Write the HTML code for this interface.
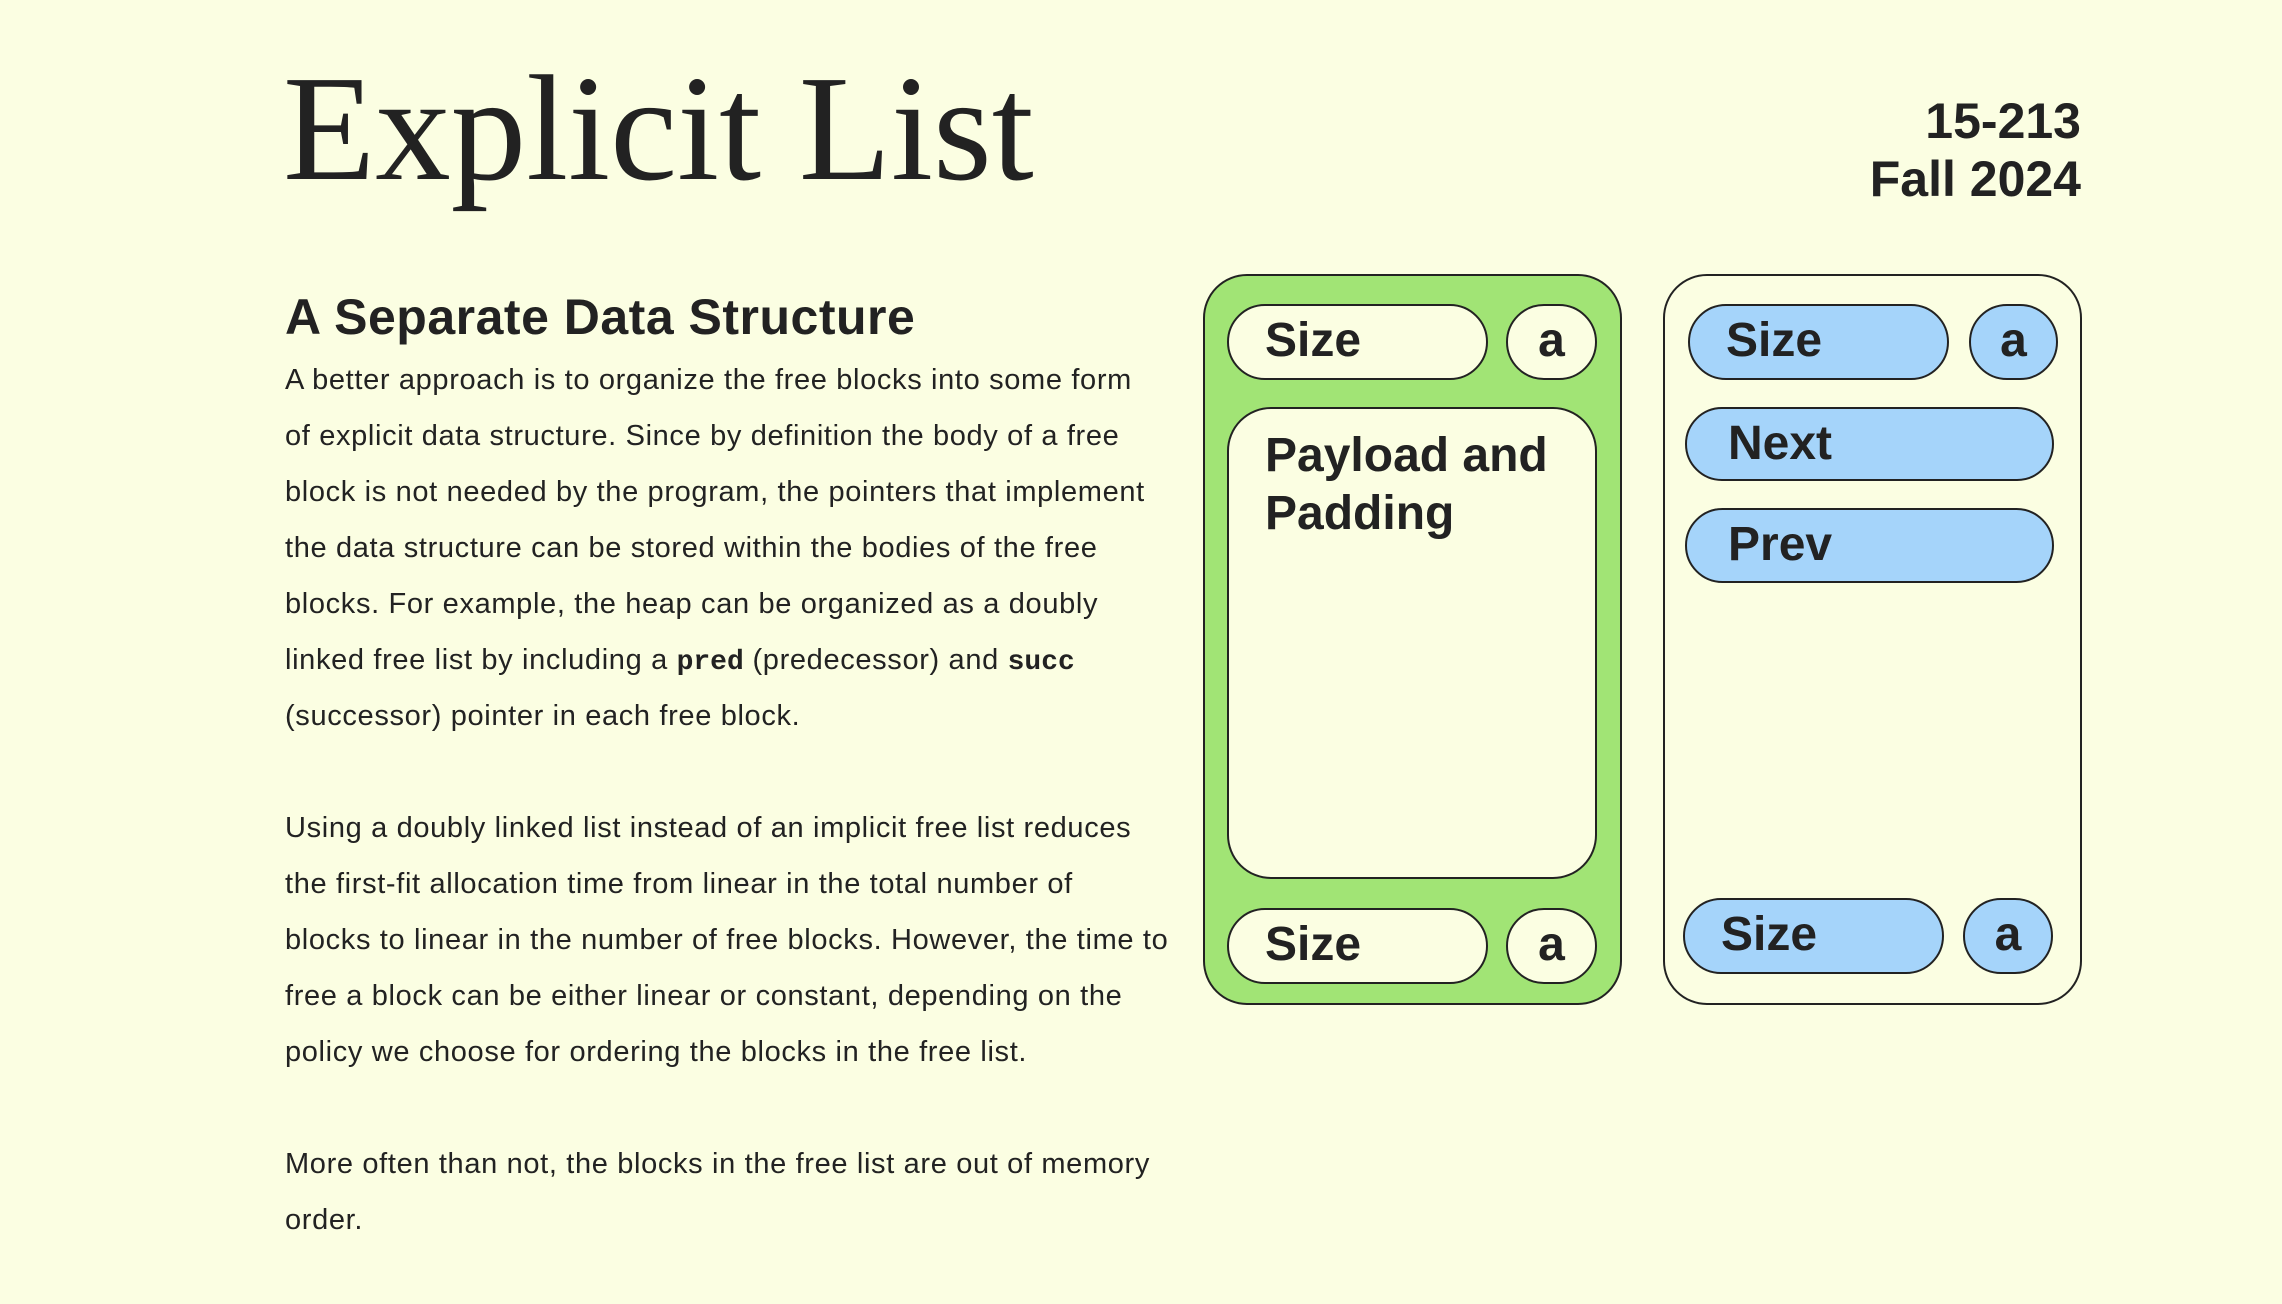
<!DOCTYPE html>
<html><head><meta charset="utf-8"><style>
*{margin:0;padding:0;box-sizing:border-box}
body{width:2282px;height:1284px;background:#fbfee2;color:#222;font-family:"Liberation Sans",sans-serif;position:relative;overflow:hidden}
.a{position:absolute}
h1{position:absolute;left:283px;top:38px;font-family:"Liberation Serif",serif;font-weight:normal;font-size:151px;line-height:180px}
.course{right:201px;top:92px;text-align:right;font-weight:bold;font-size:50px;line-height:58px}
h2{position:absolute;left:285px;top:288px;font-size:50px;line-height:58px;font-weight:bold;letter-spacing:0.5px}
.body{left:285px;top:352px;width:1000px;font-size:29px;line-height:56px;letter-spacing:0.65px;white-space:nowrap}
.body p{margin-bottom:56px}
code{font-family:"Liberation Mono",monospace;font-weight:bold;font-size:28px;line-height:0;letter-spacing:0}
.box{position:absolute;border:2px solid #222;border-radius:44px}
.pill{position:absolute;border:2px solid #222;border-radius:40px;font-weight:bold;font-size:48px;line-height:70px;padding-left:36px}
.c{padding-left:0;text-align:center}
.w{background:#fbfee2}.b{background:#a5d4fa}
</style></head><body>
<h1>Explicit List</h1>
<div class="a course">15-213<br>Fall 2024</div>
<h2>A Separate Data Structure</h2>
<div class="a body">
<p>A better approach is to organize the free blocks into some form<br>of explicit data structure. Since by definition the body of a free<br>block is not needed by the program, the pointers that implement<br>the data structure can be stored within the bodies of the free<br>blocks. For example, the heap can be organized as a doubly<br>linked free list by including a <code>pred</code> (predecessor) and <code>succ</code><br>(successor) pointer in each free block.</p>
<p>Using a doubly linked list instead of an implicit free list reduces<br>the first-fit allocation time from linear in the total number of<br>blocks to linear in the number of free blocks. However, the time to<br>free a block can be either linear or constant, depending on the<br>policy we choose for ordering the blocks in the free list.</p>
<p>More often than not, the blocks in the free list are out of memory<br>order.</p>
</div>
<div class="box" style="left:1203px;top:274px;width:419px;height:731px;background:#a1e475"></div>
<div class="pill w" style="left:1227px;top:304px;width:261px;height:76px">Size</div>
<div class="pill w c" style="left:1506px;top:304px;width:91px;height:76px">a</div>
<div class="box w" style="left:1227px;top:407px;width:370px;height:472px;padding:18px 0 0 36px;font-weight:bold;font-size:48px;line-height:58px">Payload and<br>Padding</div>
<div class="pill w" style="left:1227px;top:908px;width:261px;height:76px">Size</div>
<div class="pill w c" style="left:1506px;top:908px;width:91px;height:76px">a</div>
<div class="box w" style="left:1663px;top:274px;width:419px;height:731px"></div>
<div class="pill b" style="left:1688px;top:304px;width:261px;height:76px">Size</div>
<div class="pill b c" style="left:1969px;top:304px;width:89px;height:76px">a</div>
<div class="pill b" style="left:1685px;top:407px;width:369px;height:74px;padding-left:41px">Next</div>
<div class="pill b" style="left:1685px;top:508px;width:369px;height:75px;padding-left:41px">Prev</div>
<div class="pill b" style="left:1683px;top:898px;width:261px;height:76px">Size</div>
<div class="pill b c" style="left:1963px;top:898px;width:90px;height:76px">a</div>
</body></html>
